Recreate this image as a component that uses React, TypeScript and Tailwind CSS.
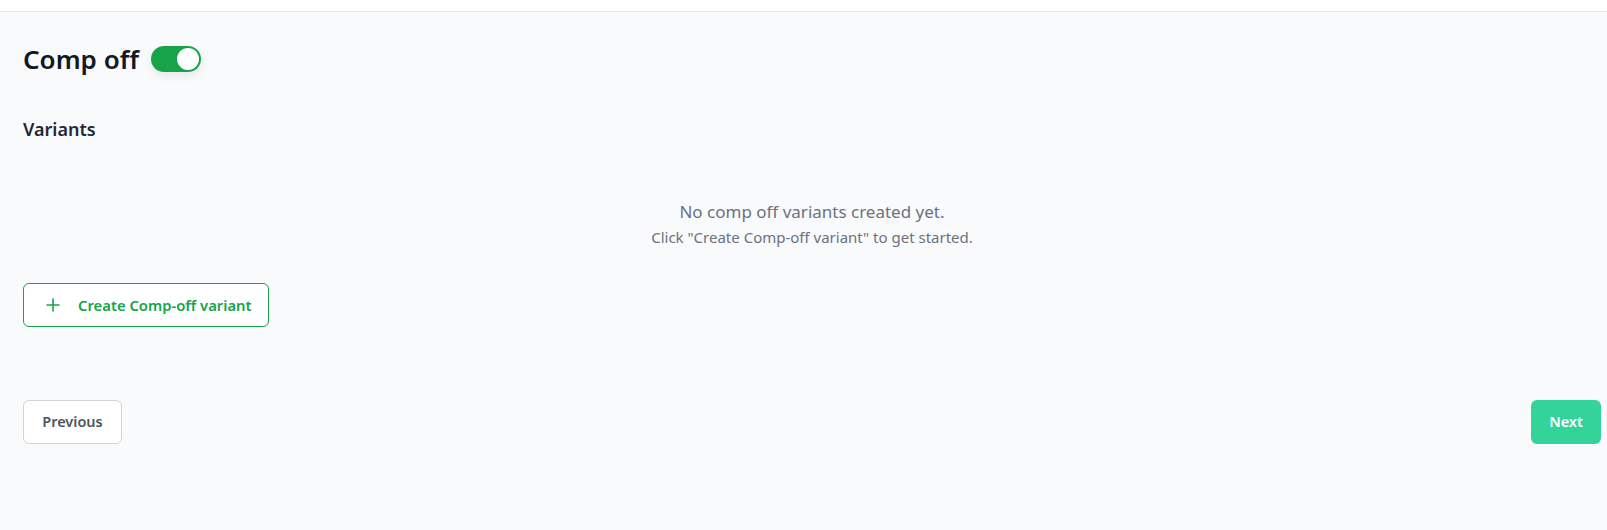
import React from "react";

export default function App() {
  return (
    <div
      className="min-h-[530px] w-full bg-[#f9fafb]"
      style={{ fontFamily: '"Noto Sans", "Open Sans", sans-serif' }}
    >
      <div className="h-3 border-b border-[#e5e7eb] bg-white" />
      <div className="pl-[23px] pr-[6px]">
        <div className="mt-[31px] flex items-center gap-3">
          <h1 className="text-[26px] leading-8 font-semibold text-[#111827]">Comp off</h1>
          <button className="flex h-[26px] w-[50px] items-center rounded-full bg-[#16a34a] p-[2px] shadow-[0_4px_10px_rgba(0,0,0,0.08)]">
            <span className="ml-auto h-[22px] w-[22px] rounded-full bg-white" />
          </button>
        </div>
        <h2 className="mt-[40px] text-lg leading-7 font-semibold text-[#1f2937]">Variants</h2>
        <div className="mt-[55px] flex flex-col items-center">
          <p className="text-[17px] leading-7 text-[#6b7280]">No comp off variants created yet.</p>
          <p className="mt-[1px] text-[15px] leading-5 text-[#6b7280]">Click "Create Comp-off variant" to get started.</p>
        </div>
        <button className="mt-[36px] flex h-[44px] w-[246px] items-center rounded-md border border-[#16a34a] bg-white pl-[22px] text-[14.8px] font-semibold text-[#16a34a]">
          <svg width="14" height="14" viewBox="0 0 14 14" className="shrink-0">
            <path d="M7 1v12M1 7h12" stroke="currentColor" strokeWidth="1.6" strokeLinecap="round" />
          </svg>
          <span className="ml-[18px]">Create Comp-off variant</span>
        </button>
        <div className="mt-[73px] flex items-center justify-between">
          <button className="h-[44px] w-[99px] rounded-md border border-[#d1d5db] bg-white text-[14.5px] font-semibold text-[#4b5563]">
            Previous
          </button>
          <button className="h-[44px] w-[70px] rounded-md bg-[#34d399] text-[14.5px] font-semibold text-white">
            Next
          </button>
        </div>
      </div>
    </div>
  );
}
